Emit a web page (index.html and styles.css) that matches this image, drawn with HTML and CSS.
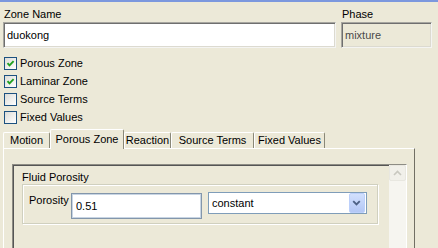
FILE: index.html
```html
<!DOCTYPE html>
<html lang="en">
<head>
    <meta charset="UTF-8">
    <title>Zone Settings</title>
    <link rel="stylesheet" href="styles.css">
</head>
<body>

<div class="fields">
    <div class="field field-name">
        <label class="field-label" for="zoneName">Zone Name</label>
        <input class="textbox" type="text" id="zoneName" value="duokong">
    </div>
    <div class="field field-phase">
        <label class="field-label" for="phase">Phase</label>
        <input class="textbox textbox-disabled" type="text" id="phase" value="mixture" disabled>
    </div>
</div>

<div class="checks">
    <div class="check-row">
        <span class="checkbox checked">
            <svg viewBox="0 0 11 11" width="11" height="11"><path d="M2.5 5.2 L4.5 7.4 L8.6 3.2" fill="none" stroke="#21a121" stroke-width="1.9"/></svg>
        </span>
        <span>Porous Zone</span>
    </div>
    <div class="check-row">
        <span class="checkbox checked">
            <svg viewBox="0 0 11 11" width="11" height="11"><path d="M2.5 5.2 L4.5 7.4 L8.6 3.2" fill="none" stroke="#21a121" stroke-width="1.9"/></svg>
        </span>
        <span>Laminar Zone</span>
    </div>
    <div class="check-row">
        <span class="checkbox"></span>
        <span>Source Terms</span>
    </div>
    <div class="check-row">
        <span class="checkbox"></span>
        <span>Fixed Values</span>
    </div>
</div>

<div class="tabs">
    <div class="tab tab-motion">Motion</div>
    <div class="tab tab-porous active">Porous Zone</div>
    <div class="tab tab-reaction">Reaction</div>
    <div class="tab tab-source">Source Terms</div>
    <div class="tab tab-fixed">Fixed Values</div>
</div>

<div class="panel">
    <div class="scroll-pane">
        <div class="scroll-content">
            <div class="group-title">Fluid Porosity</div>
            <div class="group">
                <label class="group-label" for="porosity">Porosity</label>
                <input class="porosity-input" type="text" id="porosity" value="0.51">
                <div class="combo">
                    <span class="combo-text">constant</span>
                    <span class="combo-button">
                        <svg viewBox="0 0 16 20" width="16" height="20"><path d="M4.5 8 L8 11.5 L11.5 8" fill="none" stroke="#4d6185" stroke-width="2"/></svg>
                    </span>
                </div>
            </div>
        </div>
        <div class="scrollbar">
            <div class="scroll-up">
                <svg viewBox="0 0 15 15" width="15" height="15"><path d="M4 9 L7.5 5.5 L11 9" fill="none" stroke="#c9c8c0" stroke-width="1.6"/></svg>
            </div>
        </div>
    </div>
</div>

</body>
</html>
```

FILE: styles.css
```css
body {
    margin: 0;
    height: 246px;
    overflow: hidden;
    background-color: #ece9d8;
    border-top: 2px solid #7c98de;
    font-family: "Liberation Sans", Arial, sans-serif;
    font-size: 11px;
    color: #000;
}
.fields {
    display: flex;
    gap: 5px;
    padding: 6px 0 0 3px;
}
.field {
    display: flex;
    flex-direction: column;
}
.field-name {
    width: 333px;
}
.field-phase {
    width: 91px;
}
.field-label {
    line-height: 13px;
    margin-bottom: 1px;
    padding-left: 1px;
}
.textbox {
    box-sizing: border-box;
    width: 100%;
    height: 26px;
    margin: 0;
    padding: 0 3px;
    font-family: inherit;
    font-size: 11px;
    color: #000;
    background-color: #fff;
    border: 1px solid;
    border-color: #a7a6a0 #f4f4f2 #f4f4f2 #a7a6a0;
    box-shadow: inset 1px 1px #6f6f6f, inset -1px -1px #dcdad0;
    outline: none;
}
.textbox-disabled {
    background-color: #ece9d8;
    color: #4a4a4a;
    -webkit-text-fill-color: #4a4a4a;
    opacity: 1;
}
.checks {
    padding: 6px 0 0 4px;
}
.check-row {
    display: flex;
    align-items: center;
    gap: 3px;
    height: 18px;
}
.checkbox {
    box-sizing: border-box;
    display: flex;
    align-items: center;
    justify-content: center;
    width: 13px;
    height: 13px;
    border: 1px solid #1c5180;
    background: linear-gradient(135deg, #dcdcd7, #ffffff);
}
.tabs {
    display: flex;
    align-items: flex-end;
    height: 19px;
    margin-top: 3px;
    padding-left: 3px;
}
.tab {
    box-sizing: border-box;
    height: 16px;
    padding-top: 1px;
    line-height: 13px;
    text-align: center;
    border-top: 1px solid #fff;
    border-left: 1px solid #fff;
    border-right: 1px solid #8a8878;
    border-top-left-radius: 2px;
    border-top-right-radius: 2px;
}
.tab.active {
    position: relative;
    z-index: 1;
    height: 20px;
    margin-bottom: -1px;
    padding-top: 3px;
    background-color: #ece9d8;
}
.tab-motion { width: 47px; }
.tab-porous { width: 74px; }
.tab-reaction { width: 47px; }
.tab-source { width: 83px; }
.tab-fixed { width: 71px; }
.panel {
    box-sizing: border-box;
    width: 412px;
    height: 100px;
    margin-left: 3px;
    padding: 15px 7px 0 8px;
    border-top: 1px solid #fff;
    border-left: 1px solid #fff;
    border-right: 1px solid #716f64;
}
.scroll-pane {
    display: flex;
    height: 84px;
    border-top: 1px solid #8d8c84;
    border-left: 1px solid #8d8c84;
    border-right: 1px solid #fff;
    box-shadow: inset 1px 1px #555;
}
.scroll-content {
    flex: 1;
    padding: 6px 11px 0 9px;
}
.group-title {
    line-height: 13px;
}
.group {
    display: flex;
    align-items: flex-start;
    padding: 8px 9px 4px 6px;
    border: 1px solid #d0d0bf;
    box-shadow: inset 1px 1px #fff, 1px 1px #fff;
}
.group-label {
    width: 42px;
    margin-top: 1px;
    line-height: 13px;
}
.porosity-input {
    box-sizing: border-box;
    width: 131px;
    height: 26px;
    margin: 0;
    padding: 0 4px;
    font-family: inherit;
    font-size: 11px;
    color: #000;
    background-color: #fff;
    border: 1px solid #8396ab;
    box-shadow: inset 0 0 0 1px #c8d5e3;
    outline: none;
}
.combo {
    box-sizing: border-box;
    display: flex;
    align-items: center;
    justify-content: space-between;
    width: 159px;
    height: 22px;
    margin: -1px 0 0 6px;
    padding: 0 1px 0 3px;
    background-color: #fff;
    border: 1px solid #7f9db9;
}
.combo-button {
    box-sizing: border-box;
    display: flex;
    width: 16px;
    height: 20px;
    border: 1px solid #bcd0fb;
    border-radius: 2px;
    background: linear-gradient(#d2e0fd, #b3c7f5);
}
.combo-button svg {
    margin-left: -1px;
    margin-top: -1px;
}
.scrollbar {
    width: 17px;
    background-color: #f6f5f0;
}
.scroll-up {
    box-sizing: border-box;
    display: flex;
    align-items: center;
    justify-content: center;
    width: 17px;
    height: 16px;
    border: 1px solid #e8e7e0;
    border-radius: 2px;
    background-color: #f1f0ea;
}
```
